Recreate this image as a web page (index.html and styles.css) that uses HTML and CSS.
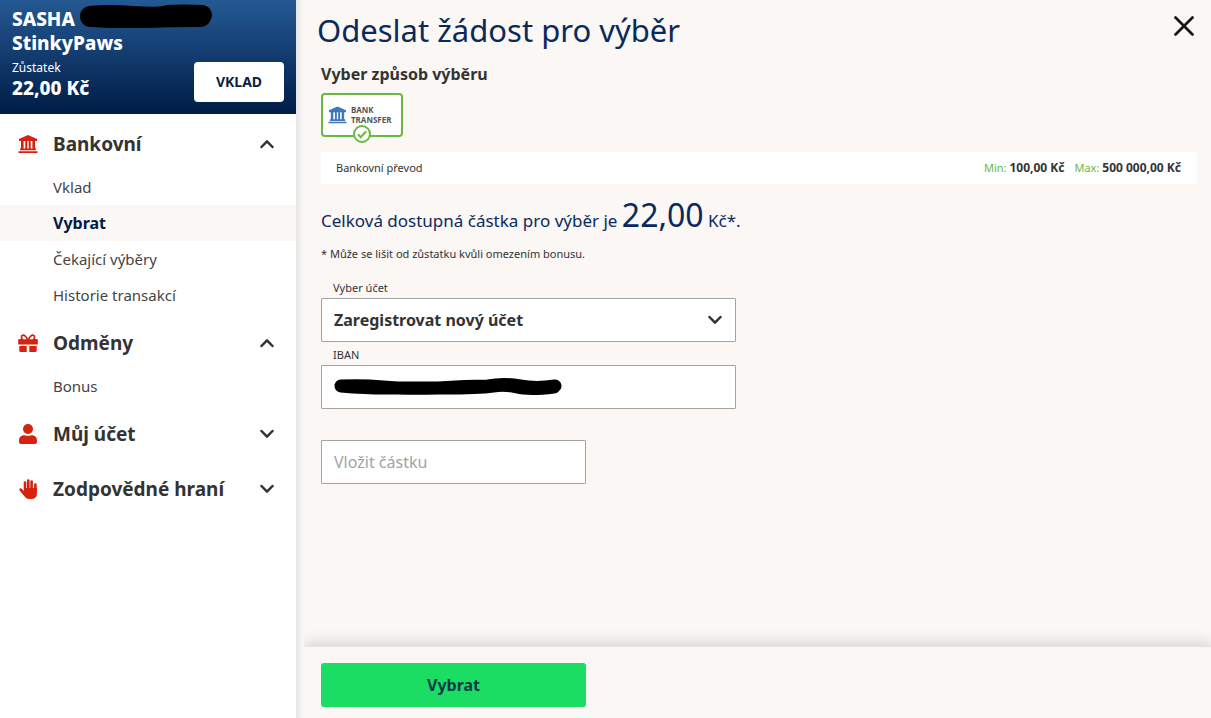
FILE: index.html
```html
<!DOCTYPE html>
<html lang="cs">
<head>
	<meta charset="utf-8" />
	<meta name="viewport" content="width=device-width, initial-scale=1" />
	<title>Odeslat žádost pro výběr</title>
	<link rel="stylesheet" href="styles.css">
</head>
<body>
	<svg class="sprite" aria-hidden="true">
		<symbol id="bank" viewBox="0 0 20 18">
			<path d="M10 0 1 4v2h18V4zM3 6h2.600v8H3zm4.300 0h2v8h-2zm3.400 0h2v8h-2zM14.400 6H17v8h-2.600zM2 13.600h16v1.600H2zM.5 16.200h19V18H.5z"/>
		</symbol>
		<symbol id="chevron" viewBox="0 0 14 10">
			<path d="m1.500 2 5.500 5.700L12.500 2" fill="none" stroke="currentColor" stroke-width="2.500" stroke-linecap="round" stroke-linejoin="round"/>
		</symbol>
	</svg>
	<aside class="sidebar">
		<header class="account">
			<div class="name">
				<span>SASHA</span>
				<svg class="redacted-name" viewBox="0 0 136 24" aria-hidden="true"><path d="M12 12Q30 10 55 12T90 11Q105 10 124 11M12 13q30 2 56 1t55-1" fill="none" stroke="#000" stroke-width="20" stroke-linecap="round"/></svg>
			</div>
			<div class="name">StinkyPaws</div>
			<div class="balance">
				<div>
					<div class="balance-label">Zůstatek</div>
					<div class="balance-amount">22,00 Kč</div>
				</div>
				<button class="deposit" type="button">VKLAD</button>
			</div>
		</header>
		<nav class="menu">
			<section>
				<button class="group" type="button" aria-expanded="true">
					<svg class="group-icon" viewBox="0 0 20 18" aria-hidden="true"><use href="#bank"/></svg>
					<span>Bankovní</span>
					<svg class="chevron up" aria-hidden="true"><use href="#chevron"/></svg>
				</button>
				<a class="link" href="#">Vklad</a>
				<a class="link active" href="#" aria-current="page">Vybrat</a>
				<a class="link" href="#">Čekající výběry</a>
				<a class="link" href="#">Historie transakcí</a>
			</section>
			<section>
				<button class="group" type="button" aria-expanded="true">
					<svg class="group-icon" viewBox="0 0 20 18" aria-hidden="true">
						<path d="M1.500 5h17a1.300 1.300 0 0 1 1.300 1.300V10.500H.2V6.300A1.300 1.300 0 0 1 1.500 5zM1.300 12H8.700v6H2.500a1.200 1.200 0 0 1-1.200-1.200zm10 0h7.400v4.800a1.200 1.200 0 0 1-1.200 1.200h-6.200z"/>
						<path d="M10 6C8 2.500 6.500 1 5 1.200 2.800 1.500 3 5 5 6zm0 0c2-3.500 3.500-5 5-4.800C17.200 1.500 17 5 15 6z" fill="#fff" stroke="currentColor" stroke-width="1.700"/>
					</svg>
					<span>Odměny</span>
					<svg class="chevron up" aria-hidden="true"><use href="#chevron"/></svg>
				</button>
				<a class="link" href="#">Bonus</a>
			</section>
			<section>
				<button class="group" type="button" aria-expanded="false">
					<svg class="group-icon" viewBox="0 0 18 20" aria-hidden="true"><circle cx="9" cy="5" r="5"/><path d="M0 18v-1.500C0 13 2.500 11.200 5.500 11.200q3.500 1.300 7 0C15.500 11.200 18 13 18 16.500V18q0 2-2 2H2q-2 0-2-2z"/></svg>
					<span>Můj účet</span>
					<svg class="chevron" aria-hidden="true"><use href="#chevron"/></svg>
				</button>
			</section>
			<section>
				<button class="group" type="button" aria-expanded="false">
					<svg class="group-icon" viewBox="0 0 18 20" aria-hidden="true">
						<path d="M5 9h13v5q0 6-6 6h-2q-2.500 0-4-2L.6 11.500C-.5 9.800 1.500 8.500 3 10l2 2z"/>
						<path d="M6 10V3.500M9.300 10V1.500m3.300 8.500V2.500m3.800 8V5.500" fill="none" stroke="currentColor" stroke-width="2.600" stroke-linecap="round"/>
					</svg>
					<span>Zodpovědné hraní</span>
					<svg class="chevron" aria-hidden="true"><use href="#chevron"/></svg>
				</button>
			</section>
		</nav>
	</aside>
	<main class="page">
		<form class="withdraw">
			<div class="content">
				<div class="title-row">
					<h1>Odeslat žádost pro výběr</h1>
					<button class="close" type="button" aria-label="Zavřít">
						<svg viewBox="0 0 20 20" aria-hidden="true"><path d="m1.500 1.500 17 17m0-17-17 17" fill="none" stroke="#161616" stroke-width="2.700" stroke-linecap="round"/></svg>
					</button>
				</div>
				<h2>Vyber způsob výběru</h2>
				<button class="method" type="button" aria-pressed="true">
					<svg class="method-icon" viewBox="0 0 20 18" aria-hidden="true"><use href="#bank"/></svg>
					<span>BANK<br>TRANSFER</span>
					<svg class="method-check" viewBox="0 0 18 18" aria-hidden="true"><circle cx="9" cy="9" r="8"/><path d="m5 9.300 2.700 2.900 5.500-6"/></svg>
				</button>
				<div class="limits">
					<span class="limits-name">Bankovní převod</span>
					<span><span class="limit">Min:</span> <b>100,00 Kč</b></span>
					<span><span class="limit">Max:</span> <b>500 000,00 Kč</b></span>
				</div>
				<p class="available">Celková dostupná částka pro výběr je <span class="sum">22,00</span> Kč*.</p>
				<p class="note">* Může se lišit od zůstatku kvůli omezením bonusu.</p>
				<label class="label" for="account">Vyber účet</label>
				<div class="field">
					<select id="account">
						<option>Zaregistrovat nový účet</option>
					</select>
					<svg class="chevron select-arrow" aria-hidden="true"><use href="#chevron"/></svg>
				</div>
				<label class="label" for="iban">IBAN</label>
				<div class="field">
					<input id="iban" type="text">
					<svg class="redacted-iban" viewBox="0 0 230 20" aria-hidden="true"><path d="M8 9q22-1 42 1t55 1q28-2 50-2 16-3 32 0t35 0M8 9q24 2 45 2t57 0 50-2q12-2 24 1t37 0" fill="none" stroke="#000" stroke-width="13" stroke-linecap="round"/></svg>
				</div>
				<input class="amount" type="text" placeholder="Vložit částku" aria-label="Vložit částku">
			</div>
			<footer class="actions">
				<button class="submit" type="submit">Vybrat</button>
			</footer>
		</form>
	</main>
</body>
</html>
```
FILE: styles.css
```css
* { box-sizing: border-box; }
body {
	margin: 0;
	min-height: 100vh;
	display: flex;
	font-family: "Noto Sans", sans-serif;
	font-size: 15px;
	line-height: 20px;
	color: #333;
	background-color: #faf7f4;
}
button, input, select { font: inherit; color: inherit; }
button { border: 0; padding: 0; cursor: pointer; }
svg { display: block; fill: currentColor; }
.sprite { position: absolute; width: 0; height: 0; }

/* sidebar */
.sidebar {
	flex: 0 0 296px;
	background-color: #fff;
}
.account {
	padding: 7px 12px 12px;
	color: #fff;
	background: linear-gradient(#245993, #001c47);
}
.name {
	display: flex;
	gap: 3px;
	font-size: 19px;
	line-height: 24px;
	font-weight: 800;
}
.redacted-name {
	width: 136px;
	height: 24px;
	margin-top: -3px;
}
.balance {
	display: flex;
	justify-content: space-between;
	margin-top: 5px;
}
.balance-label {
	font-size: 12px;
	line-height: 16px;
}
.balance-amount {
	font-size: 19px;
	line-height: 24px;
	font-weight: 800;
}
.deposit {
	width: 90px;
	height: 40px;
	margin-top: 2px;
	border-radius: 4px;
	background-color: #fff;
	color: #0b1f3f;
	font-size: 14px;
	font-weight: 700;
}
.menu {
	display: flex;
	flex-direction: column;
	gap: 4px;
	padding-top: 4px;
}
.group {
	display: flex;
	align-items: center;
	gap: 15px;
	width: 100%;
	height: 51px;
	padding: 0 22px 0 18px;
	background: none;
	font-size: 19px;
	font-weight: 700;
	text-align: left;
}
.group span { flex: 1; }
.group-icon {
	width: 20px;
	height: 20px;
	color: #d6220f;
}
.chevron {
	width: 14px;
	height: 10px;
}
.up { transform: rotate(180deg); }
.link {
	display: block;
	padding: 8px 12px 8px 53px;
	color: #444;
	text-decoration: none;
}
.active {
	background-color: #faf7f4;
	color: #001c47;
	font-size: 16px;
	font-weight: 700;
}

/* withdrawal form */
.page {
	flex: 1;
	display: flex;
	padding-left: 8px;
	background: linear-gradient(to right, #e8e7e6, #faf7f4 8px);
}
.withdraw {
	flex: 1;
	display: flex;
	flex-direction: column;
	overflow: hidden;
}
.content {
	flex: 1;
	padding: 8px 14px 16px 17px;
}
.title-row {
	display: flex;
	justify-content: space-between;
	align-items: center;
	margin: 0 3px 12px -4px;
}
h1, h2, p { margin: 0; }
h1 {
	font-size: 31px;
	line-height: 44px;
	font-weight: 400;
	color: #0a2a5c;
}
.close {
	background: none;
	margin-bottom: 8px;
}
.close svg {
	width: 20px;
	height: 20px;
}
h2 {
	font-size: 16px;
	line-height: 20px;
}
.method {
	position: relative;
	display: flex;
	align-items: center;
	gap: 4px;
	width: 82px;
	height: 44px;
	margin: 9px 0 15px;
	padding-left: 5px;
	border: 2px solid #6ab840;
	border-radius: 4px;
	background-color: #fff;
	color: #555;
	font-size: 8px;
	line-height: 10px;
	font-weight: 700;
	text-align: left;
}
.method-icon {
	flex: none;
	width: 19px;
	height: 18px;
	color: #3f77bd;
}
.method-check {
	position: absolute;
	left: 30px;
	bottom: -8px;
	width: 18px;
	height: 18px;
	fill: #fff;
	stroke: #6ab840;
	stroke-width: 2;
}
.limits {
	display: flex;
	gap: 10px;
	padding: 6px 16px 6px 15px;
	background-color: #fff;
	font-size: 11px;
}
.limits b { font-size: 12px; }
.limits-name { flex: 1; }
.limit { color: #6ab840; }
.available {
	margin-top: 15px;
	font-size: 17px;
	line-height: 40px;
	color: #0a2a5c;
}
.sum {
	font-size: 32px;
	line-height: 1;
}
.note {
	margin: 3px 0 11px;
	font-size: 11px;
}
.label {
	display: block;
	padding: 5px 12px 2px;
	font-size: 11px;
	line-height: 16px;
}
.field {
	position: relative;
	max-width: 415px;
}
input, select {
	display: block;
	width: 100%;
	height: 44px;
	padding: 0 12px;
	border: 1px solid #a3a3a3;
	border-radius: 1px;
	background-color: #fff;
	font-size: 16px;
}
select {
	appearance: none;
	font-weight: 700;
}
.select-arrow {
	position: absolute;
	right: 14px;
	top: 17px;
	pointer-events: none;
}
.redacted-iban {
	position: absolute;
	left: 12px;
	top: 12px;
	width: 230px;
	height: 20px;
}
.amount {
	max-width: 265px;
	margin-top: 31px;
}
.amount::placeholder { color: #a3a3a3; }
.actions {
	padding: 16px 17px 11px;
	background-color: #faf7f4;
	border-top: 1px solid #e6e2df;
	box-shadow: 0 -4px 12px #d9d5d2;
}
.submit {
	width: 265px;
	height: 44px;
	border-radius: 3px;
	background-color: #1bdd63;
	color: #0b3a4a;
	font-size: 16px;
	font-weight: 700;
}
```
